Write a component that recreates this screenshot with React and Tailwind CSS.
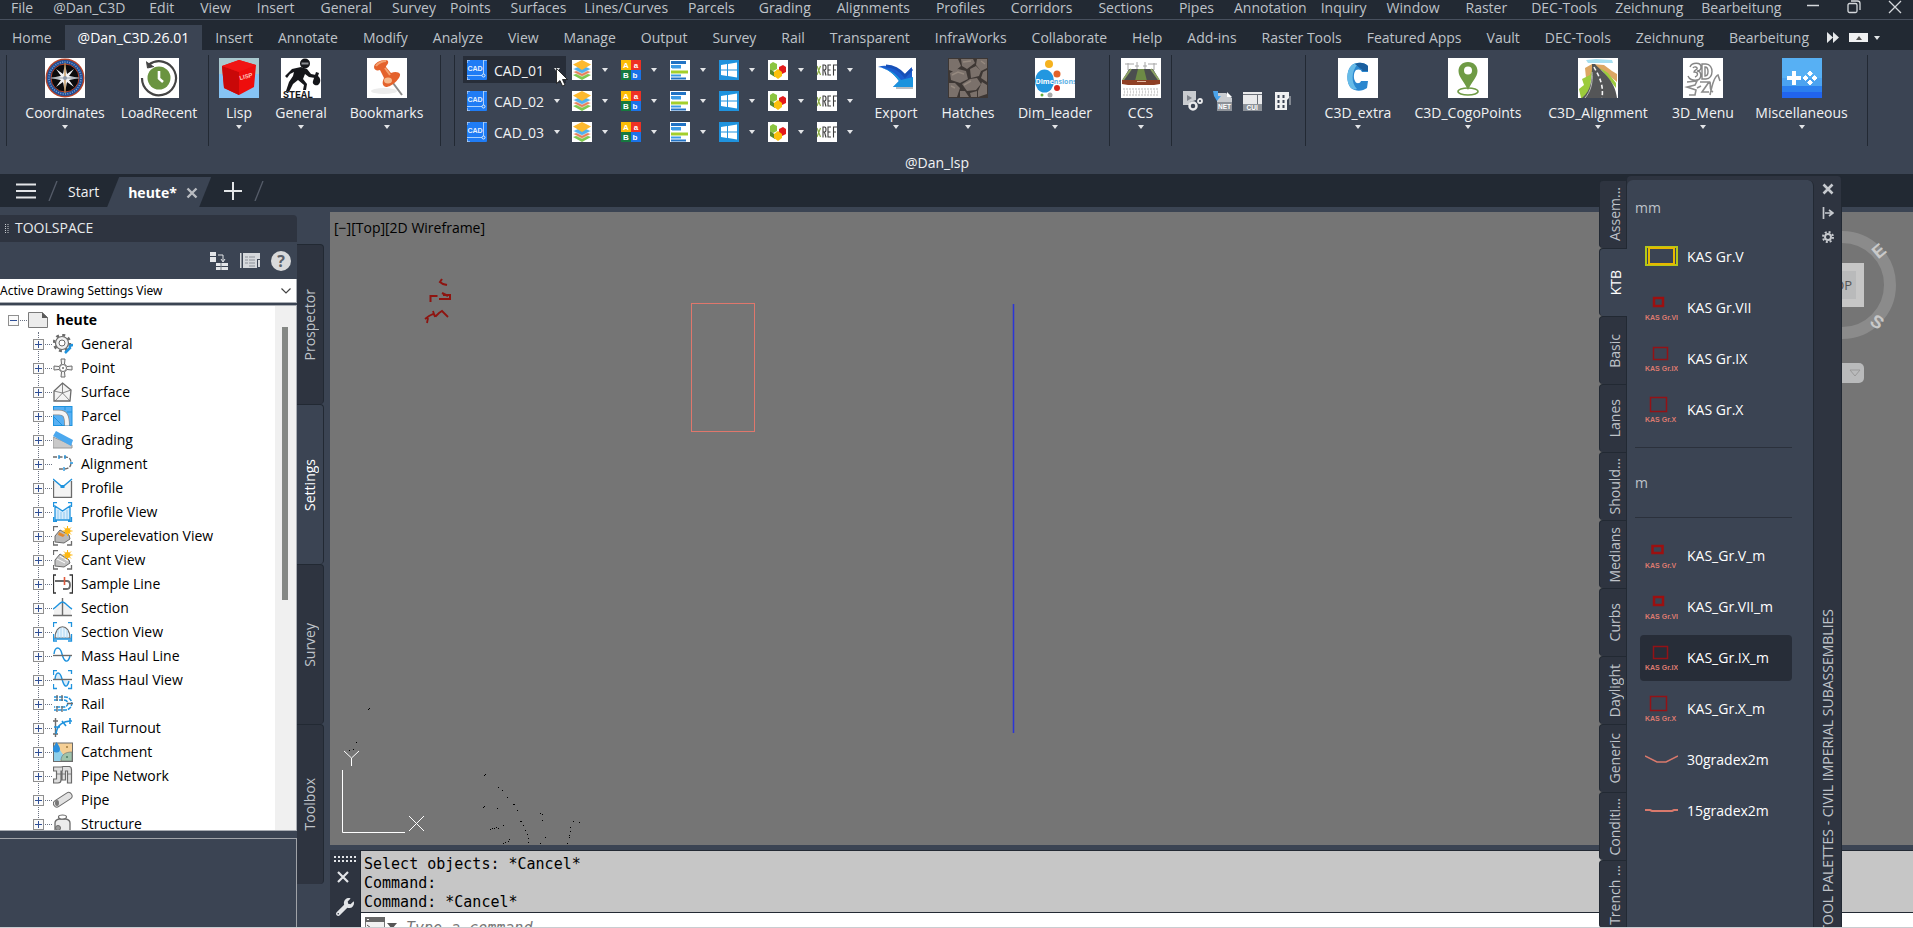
import { FaWrench } from "react-icons/fa";

const menus = [
  ["File", "mr-5"], ["@Dan_C3D", "mr-6"], ["Edit", "mr-[26px]"], ["View", "mr-[26px]"],
  ["Insert", "mr-[26px]"], ["General", "mr-5"], ["Survey", "mr-[14px]"], ["Points", "mr-5"],
  ["Surfaces", "mr-[18px]"], ["Lines/Curves", "mr-5"], ["Parcels", "mr-6"], ["Grading", "mr-[26px]"],
  ["Alignments", "mr-[26px]"], ["Profiles", "mr-[26px]"], ["Corridors", "mr-[26px]"], ["Sections", "mr-[26px]"],
  ["Pipes", "mr-5"], ["Annotation", "mr-[14px]"], ["Inquiry", "mr-5"], ["Window", "mr-[26px]"],
  ["Raster", "mr-6"], ["DEC-Tools", "mr-[18px]"], ["Zeichnung", "mr-[18px]"], ["Bearbeitung", ""],
];

const ribbonTabs = [
  "Home", "@Dan_C3D.26.01", "Insert", "Annotate", "Modify", "Analyze", "View", "Manage", "Output",
  "Survey", "Rail", "Transparent", "InfraWorks", "Collaborate", "Help", "Add-ins", "Raster Tools",
  "Featured Apps", "Vault", "DEC-Tools", "Zeichnung", "Bearbeitung",
];

function Caret({ className = "" }) {
  return (
    <svg viewBox="0 0 6 4" className={`w-[6px] h-1 shrink-0 ${className}`} aria-hidden="true">
      <path d="M0 0h6L3 4z" fill="#e3e5e8" />
    </svg>
  );
}

/* ---------- large ribbon icons, 40x40 ---------- */

const bigIcons = {
  Coordinates: (
    <>
      <rect width="40" height="40" fill="#fff" />
      <circle cx="20" cy="20" r="19.5" fill="#b5432a" />
      <circle cx="20" cy="20" r="18" fill="#1f4f96" />
      <circle cx="20" cy="20" r="16" fill="none" stroke="#7ea3d6" strokeWidth="1.5" strokeDasharray="1 1.4" />
      <circle cx="20" cy="20" r="14" fill="#0b0b0d" stroke="#b5432a" strokeWidth="1" />
      <path d="M20 6l2.4 11.6L34 20l-11.6 2.4L20 34l-2.4-11.6L6 20l11.6-2.4z" fill="#cfd3d8" />
      <path d="M11 11l7 5 2-3 2 3 7-5-5 7 3 2-3 2 5 7-7-5-2 3-2-3-7 5 5-7-3-2 3-2z" fill="#f1f2f4" />
      <path d="M20 5v30" stroke="#c08a45" strokeWidth="1.2" />
      <path d="M6 20h28" stroke="#9aa0a8" strokeWidth="1" />
      <circle cx="20" cy="20" r="2" fill="#8d98a8" />
    </>
  ),
  LoadRecent: (
    <>
      <rect width="40" height="40" fill="#fff" />
      <path d="M3 20A17 17 0 1 0 10 6.500" fill="none" stroke="#444" strokeWidth="2.2" />
      <path d="M7.500 3.500l1 6.500 6.500-1.500" fill="#444" stroke="#444" strokeWidth="1" />
      <circle cx="20" cy="20" r="11.500" fill="#6a9440" />
      <path d="M20 13v7.500l4 3.500" fill="none" stroke="#fff" strokeWidth="2.6" />
    </>
  ),
  Lisp: (
    <>
      <rect width="40" height="40" fill="#86c4f5" />
      <rect width="40" height="16" fill="#a9c9cf" />
      <path d="M20 2l17 5-2 22-15 8L5 30 3 8z" fill="#ee0d0d" />
      <path d="M3 8l17 6v23L5 30z" fill="#c90808" />
      <path d="M20 2l17 5-17 7L3 8z" fill="#f01414" />
      <text x="21" y="22" fontSize="6" fontWeight="700" fill="#ffc9c0" transform="rotate(-14 21 22)" fontFamily="Liberation Sans, sans-serif">LISP</text>
    </>
  ),
  General: (
    <>
      <rect width="40" height="40" fill="#fff" />
      <circle cx="24" cy="5.500" r="5" fill="#15161a" />
      <path d="M20.500 4.500h7v2h-7z" fill="#8b8d92" />
      <path d="M11 11l9-2 6 2 4 5 5 1-1 3-6-1-4-3-2 5 4 5-1 6h-3l1-5-6-5-5 4-4 8-3-1 3-9 4-6 1-4-4 2-3 4-2-2z" fill="#15161a" />
      <path d="M35 14l3 1-1 3c3 2 3 7 0 9-3 1-6-1-5-4z" fill="#15161a" />
      <text x="2" y="39.500" fontSize="10" fontWeight="700" fill="#15161a" fontFamily="Liberation Mono, monospace">STEAL</text>
    </>
  ),
  Bookmarks: (
    <>
      <rect width="40" height="40" fill="#fff" />
      <ellipse cx="17" cy="33" rx="13" ry="3" fill="#ececec" />
      <path d="M26 25l9 12" stroke="#8b8b8b" strokeWidth="2" />
      <path d="M7 9c0-5 11-9 14-6 1 3-2 4-2 6l5 6c4-2 8-1 9 1 1 4-8 13-14 13-4-1-4-5-2-9l-4-8c-3 1-6 0-6-3z" fill="#e4622c" />
      <path d="M9 8c2-3 7-5 10-5M18 10l5 7" fill="none" stroke="#f3a06f" strokeWidth="2" />
      <ellipse cx="21" cy="22.500" rx="4" ry="3" fill="#f5b98d" />
    </>
  ),
  Export: (
    <>
      <rect width="40" height="40" fill="#fff" />
      <path d="M20 30h17" stroke="#b9bcc0" strokeWidth="2" />
      <path d="M2 9c8-3 19 0 26 8l8-8v20H17l6-6C18 16 11 10 2 9z" fill="#1c5fd0" />
      <path d="M2 9c9 1 18 6 23 13l12-3v10H17l6-6C18 16 11 10 2 9z" fill="#1b93dd" />
      <path d="M10 8c8 0 14 4 19 10l7-7" fill="none" stroke="#1750b8" strokeWidth="3" />
    </>
  ),
  Hatches: (
    <>
      <rect width="40" height="40" fill="#3d3734" />
      <path d="M1 1h9l3 7-7 6-5-2zM13 1h12l2 4-8 6-5-3zM29 1h10v9l-6 3-5-6zM2 15l8-4 8 2 2 8-8 4-9-3zM22 11l6-3 5 5-2 5-8 2zM35 14l4-2v12l-6-4zM1 25l6 0 5 5-3 9H1zM14 26l8-5 7-1 4 6-5 6-9 1zM34 24l5 3v9l-9 3v-6zM12 33l5 0 4 6h-9zM22 35l7-2v6h-6z" fill="#7b716b" />
      <path d="M4 17l6-3 6 2M16 27l7-4M15 4l8-1M33 3l4 3M3 28l4 2" stroke="#95897f" strokeWidth="1.500" fill="none" />
    </>
  ),
  Dim_leader: (
    <>
      <rect width="40" height="40" fill="#fff" />
      <circle cx="14" cy="6" r="4" fill="#f5b21f" />
      <ellipse cx="9.500" cy="23" rx="9.500" ry="11.500" fill="#2297e0" />
      <circle cx="22" cy="16" r="3.500" fill="#e2622b" />
      <circle cx="22" cy="30" r="3" fill="#d8281c" />
      <circle cx="15" cy="37" r="2.500" fill="#a9a9a9" />
      <circle cx="7" cy="37" r="1.500" fill="#66ad3a" />
      <text x="0.500" y="25.500" fontSize="7" fontWeight="700" fill="#fff" fontFamily="Open Sans, sans-serif">Dime<tspan fill="#5fb2e6">nsions</tspan></text>
    </>
  ),
  CCS: (
    <>
      <rect width="40" height="40" fill="#fff" />
      <path d="M7 12V5M16 12V4M24 12V4M33 12V5M4 6h9M27 6h9M14 8h4M22 8h4" stroke="#a6a6a6" fill="none" />
      <path d="M8 11h24l7 12H1z" fill="#4b4e4f" />
      <path d="M17 11h6l3 12H14z" fill="#6d8a45" />
      <path d="M10 11L2 22M30 11l8 11" stroke="#8da264" strokeWidth="2" />
      <path d="M1 22h38v4l-6 1H7l-6-1z" fill="#8e3f24" />
      <path d="M16 23.500h9" stroke="#e1b79f" />
      <path d="M2 31h36M2 37h36" stroke="#b5b5b5" strokeDasharray="2 1" />
      <path d="M3 34h34" stroke="#d0d0d0" strokeWidth="3" strokeDasharray="1 2" />
    </>
  ),
  C3D_extra: (
    <>
      <rect width="40" height="40" fill="#fff" />
      <path d="M30 8c-4-4-12-4-16-1-6 5-6 18-1 23 5 4 12 3 16 0l1-7h-7c-1 3-5 3-6 0-2-4-1-9 1-11 2-1 5-1 6 2h6z" fill="#2a87cf" />
      <path d="M14 7c-6 5-6 18-1 23 2 1 4 2 6 1-6-6-6-18 1-25-2-1-4 0-6 1z" fill="#66bbe8" />
      <path d="M30 8c-4-4-9-4-13-2l6 5c1 0 2 1 1 2h6z" fill="#1a5f9f" />
    </>
  ),
  C3D_CogoPoints: (
    <>
      <rect width="40" height="40" fill="#fff" />
      <ellipse cx="20" cy="33.500" rx="10" ry="3.500" fill="none" stroke="#6f9b45" strokeWidth="1.600" />
      <path d="M20 4c-6 0-9.500 4-9.500 9 0 6 6 11 9.500 19 3.500-8 9.500-13 9.500-19 0-5-3.500-9-9.500-9z" fill="#6f9b45" />
      <circle cx="20" cy="12.500" r="4" fill="#fff" />
    </>
  ),
  C3D_Alignment: (
    <>
      <rect width="40" height="40" fill="#fff" />
      <path d="M8 2l10-1 16 1 1 3H10z" fill="#a7dff0" />
      <path d="M7 10l7-4 12 1 8 6 5 3v8L24 12 8 20z" fill="#dca663" />
      <path d="M4 21l8-4 2-5-3 28H3l-2-9 5-4zM22 10l8 5 8 10v5z" fill="#9ccb3c" />
      <path d="M14 6h3c5 6 20 15 22 34H4c10-8 10-20 10-34z" fill="#545557" />
      <path d="M16 9c4 8 10 16 8 31" fill="none" stroke="#f4f4f4" strokeWidth="1.600" strokeDasharray="4 2.500" />
      <path d="M14 14c1 10-1 19-7 26" fill="none" stroke="#b9b9b9" strokeWidth="1" />
    </>
  ),
  "3D_Menu": (
    <>
      <rect width="40" height="40" fill="#fff" />
      <path d="M7 9c2-5 11-5 11 0 0 3-2 4-4 4 5 0 5 8 0 9-4 1-8-1-9-4M10 10c1-2 5-1 4 1-1 1-3 1-3 3 5 0 4 4 1 5M19 6h4c8 0 8 15 0 15h-4zM22 9c4 0 4 9 0 9z" fill="none" stroke="#858585" strokeWidth="1.400" />
      <path d="M4 24l10-1-2 4-8 2 9 3-1 5H6M17 24h9l-7 10h7M14 30l4-2M27 37c2-10 5-19 8-20l2 6M27 24c1 6-1 8 3 10" fill="none" stroke="#8c8c8c" strokeWidth="1.600" />
    </>
  ),
  Miscellaneous: (
    <>
      <rect width="40" height="40" fill="#57b0f4" />
      <rect y="20" width="40" height="8" fill="#4ba3f0" />
      <rect y="28" width="40" height="6" fill="#2b7fee" />
      <rect y="34" width="40" height="6" fill="#2164ee" />
      <path d="M10 13h4v5h5v4h-5v5h-4v-5H5v-4h5z" fill="#fff" />
      <path d="M28 13l2.500 2.500L28 18l-2.500-2.500zM28 22l2.500 2.500L28 27l-2.500-2.500zM23.500 17.500L26 20l-2.500 2.500L21 20zM32.500 17.500L35 20l-2.500 2.500L30 20z" fill="#fff" stroke="#fff" strokeWidth="1" />
    </>
  ),
};

function BigButton({ name, width, menu = true }) {
  return (
    <button className={`flex flex-col items-center shrink-0 pt-[3px] ${width}`}>
      <svg viewBox="0 0 40 40" className="w-10 h-10" aria-hidden="true">{bigIcons[name]}</svg>
      <span className="mt-[5px] h-5 leading-5 whitespace-nowrap">{name}</span>
      {menu && <Caret className="mt-[2px]" />}
    </button>
  );
}

/* ---------- small ribbon icons, 20x20 ---------- */

const smallIcons = [
  <>
    <rect width="20" height="20" fill="#fff" />
    <path d="M10 12l9 3-9 5-9-5z" fill="#7ec850" />
    <path d="M10 8.500l9 3.500-9 4.500L1 12z" fill="#e8805a" stroke="#fff" strokeWidth="0.500" />
    <path d="M10 5l9 4-9 4.500L1 9z" fill="#52b1ee" stroke="#fff" strokeWidth="0.500" />
    <path d="M10 0l9 4.500L10 10 1 4.500z" fill="#fdb92e" />
  </>,
  <>
    <rect width="10" height="10" fill="#fbbc05" />
    <rect x="10" width="10" height="10" fill="#ee3124" />
    <rect y="10" width="10" height="10" fill="#16793f" />
    <rect x="10" y="10" width="10" height="10" fill="#1a73e8" />
    <g fill="#fff" fontSize="8" fontWeight="700" textAnchor="middle" fontFamily="Liberation Sans, sans-serif">
      <text x="5" y="8">A</text>
      <text x="15" y="8">a</text>
      <text x="5" y="18">B</text>
      <text x="14" y="18">b</text>
    </g>
  </>,
  <>
    <rect width="20" height="20" fill="#fff" />
    <path d="M1 1h15v3H1z" fill="#2273c4" />
    <path d="M1 5h10v3H1z" fill="#3c9be6" />
    <path d="M2 8h9v1H2z" fill="#9fcdf0" />
    <path d="M1 10.500h17v3H1z" fill="#a4cf2c" />
    <path d="M1 14.500h10v2H1z" fill="#3c9be6" />
    <path d="M1 17.500h15v2H1z" fill="#2273c4" />
  </>,
  <>
    <rect width="20" height="20" fill="#1f93de" />
    <path d="M2 5l6-1v5.500H2zM9 4l9-1.500v7H9zM2 10.500h6V16l-6-1zM9 10.500h9v7L9 16z" fill="#fff" />
  </>,
  <>
    <rect width="20" height="20" fill="#fff" />
    <path d="M5 2l4 2v5l-4 2-3-2V4z" fill="#8bc53f" />
    <path d="M2 9l3 2 3 3-1 3-5-3z" fill="#5a8a2a" />
    <path d="M15 5l3 2v5l-4 2-3-3V7z" fill="#e31b1b" />
    <path d="M10 9l4 3v4l-4 3-4-3v-4z" fill="#fbc00d" />
  </>,
  <>
    <rect width="20" height="20" fill="#fff" />
    <path d="M0 6l3.500 9M3.500 6L0 15" stroke="#8aac45" strokeWidth="1.200" />
    <path d="M6 15.500v-11M6 5h1.500q1.500 0 1.500 2.500T7.500 10H6M7.500 10L9 15.500M14 5h-3v10h3M11 10h2.500M16.500 15.500V5H20M16.500 10H19" fill="none" stroke="#3c3c3c" strokeWidth="1.100" />
  </>,
];

const smallNames = ["Layers", "Text", "Align", "Window", "Blocks", "Xref"];

function CadIcon() {
  return (
    <svg viewBox="0 0 20 20" className="w-5 h-5 shrink-0" aria-hidden="true">
      <rect width="20" height="20" rx="1" fill="#1f7cf5" />
      <path d="M0 3V0h3M17 0h3M0 17v3h3" fill="none" stroke="#e6f0fd" strokeWidth="1" />
      <path d="M16.500 0v14M0 15.500h15" stroke="#a9d0fb" strokeWidth="1" />
      <circle cx="16.500" cy="15.500" r="1.500" fill="#1f7cf5" stroke="#dfeefd" />
      <text x="0.500" y="11" fontSize="7" fontWeight="700" fill="#e6f0fd" fontFamily="Liberation Sans, sans-serif">CAD</text>
    </svg>
  );
}

function CadRow({ label, active }) {
  return (
    <div className="flex items-center h-[27px]">
      <button className={`flex items-center w-[103px] h-full pl-1 mr-[6px] shrink-0 ${active ? "bg-[#272d38]" : ""}`}>
        <CadIcon />
        <span className="ml-[7px] flex-1 text-left leading-5 pt-[2px]">{label}</span>
        <Caret className="mr-[6px]" />
      </button>
      {smallIcons.map((icon, i) => (
        <button key={i} aria-label={smallNames[i]} className="flex items-center w-[49px] h-full shrink-0">
          <svg viewBox="0 0 20 20" className="w-5 h-5" aria-hidden="true">{icon}</svg>
          <Caret className="ml-[10px]" />
        </button>
      ))}
    </div>
  );
}

function Divider() {
  return <div className="w-px h-[91px] bg-[#222933] shrink-0" />;
}

function MenuBar() {
  return (
    <nav aria-label="Menu" className="flex items-center h-5 pb-[5px] pl-[11px] bg-[#222933] border-b border-[#48505e] text-[#bfc3c9] shrink-0">
      {menus.map(([label, gap]) => (
        <button key={label} className={`leading-[15px] whitespace-nowrap shrink-0 ${gap}`}>{label}</button>
      ))}
      <div className="ml-auto mr-[11px] flex items-center gap-[27px] text-[#d5d8dc]">
        <button aria-label="Minimize"><svg viewBox="0 0 14 14" className="w-[14px] h-[14px]"><path d="M1 5.500h12" stroke="currentColor" strokeWidth="1.500" /></svg></button>
        <button aria-label="Restore"><svg viewBox="0 0 14 14" className="w-[14px] h-[14px]" fill="none" stroke="currentColor" strokeWidth="1.300"><rect x="1" y="3.500" width="9" height="9" rx="1.500" /><path d="M4 1h6.500Q13 1 13 3.500V10" /></svg></button>
        <button aria-label="Close"><svg viewBox="0 0 14 14" className="w-[14px] h-[14px]"><path d="M1 1l12 12M13 1L1 13" stroke="currentColor" strokeWidth="1.300" /></svg></button>
      </div>
    </nav>
  );
}

function RibbonTabs() {
  return (
    <nav aria-label="Ribbon" className="flex gap-px h-[30px] pt-[5px] bg-[#222933] text-[#bfc3c9] shrink-0">
      {ribbonTabs.map((label, i) => (
        <button key={label} className={`whitespace-nowrap shrink-0 ${i === 1 ? "px-[13px] bg-[#3b4453] text-white" : "px-3"}`}>{label}</button>
      ))}
      <div className="flex items-center ml-[5px]">
        <button aria-label="More tabs"><svg viewBox="0 0 12 11" className="w-3 h-[11px]"><path d="M0 0l6 5.500L0 11zM6 0l6 5.500L6 11z" fill="#e6e8ea" /></svg></button>
        <button aria-label="Collapse ribbon" className="ml-[10px] w-[19px] h-[9px] bg-[#f0f1f2] flex items-center justify-center"><svg viewBox="0 0 6 4" className="w-[6px] h-1"><path d="M0 4h6L3 0z" fill="#555" /></svg></button>
        <button aria-label="Ribbon options" className="ml-[6px]"><Caret /></button>
      </div>
    </nav>
  );
}

function Ribbon() {
  return (
    <div className="h-[124px] bg-[#3b4453] text-[#f1f2f3] shrink-0 pl-[6px] pt-[5px] overflow-hidden">
      <div className="w-fit">
        <div className="flex h-[98px]">
          <Divider />
          <div className="flex pl-[11px] pr-[2px]">
            <BigButton name="Coordinates" width="w-[94px]" />
            <BigButton name="LoadRecent" width="w-[94px]" menu={false} />
          </div>
          <Divider />
          <BigButton name="Lisp" width="w-[60px]" />
          <BigButton name="General" width="w-16" />
          <BigButton name="Bookmarks" width="w-[107px]" />
          <Divider />
          <div className="w-[13px] shrink-0" />
          <Divider />
          <div className="flex flex-col gap-1 pl-2 pt-px">
            <CadRow label="CAD_01" active />
            <CadRow label="CAD_02" />
            <CadRow label="CAD_03" />
          </div>
          <BigButton name="Export" width="w-[60px]" />
          <BigButton name="Hatches" width="w-[84px]" />
          <BigButton name="Dim_leader" width="w-[90px]" />
          <div className="w-[9px] shrink-0" />
          <Divider />
          <BigButton name="CCS" width="w-[61px]" />
          <Divider />
          <div className="flex items-center gap-[10px] w-[133px] h-[91px] pl-[11px] shrink-0">
            <button aria-label="Run script">
              <svg viewBox="0 0 20 20" className="w-5 h-5">
                <path d="M0 0h13v9l-6 2v3H0z" fill="#c9ccd0" />
                <path d="M4 4l5 3-5 3z" fill="#7d828a" />
                <circle cx="10" cy="15" r="3.500" fill="#3b4453" stroke="#e9eaec" strokeWidth="2.500" />
                <circle cx="17" cy="10" r="2" fill="#3b4453" stroke="#e9eaec" strokeWidth="1.800" />
              </svg>
            </button>
            <button aria-label="Load .NET">
              <svg viewBox="0 0 20 20" className="w-5 h-5">
                <path d="M4 2h9l6 5v13H4z" fill="#c9ccd0" />
                <path d="M14 1v5h5z" fill="#fff" />
                <path d="M0 0h5v5h3l-4 5-3-5z" fill="#4aa3ea" />
                <rect x="4" y="11" width="15" height="9" fill="#8d9299" />
                <text x="5" y="18" fontSize="6.500" fontWeight="700" fill="#fff" fontFamily="Liberation Sans, sans-serif">NET</text>
              </svg>
            </button>
            <button aria-label="Customize interface">
              <svg viewBox="0 0 20 20" className="w-5 h-5">
                <rect y="1" width="19" height="18" fill="#e9eaec" />
                <path d="M0 3.500h19M14.500 4v9" stroke="#6b7078" />
                <rect y="13" width="19" height="7" fill="#8d9299" />
                <text x="3.500" y="19" fontSize="6.500" fontWeight="700" fill="#fff" fontFamily="Liberation Sans, sans-serif">CUI</text>
              </svg>
            </button>
            <button aria-label="Block list">
              <svg viewBox="0 0 20 20" className="w-5 h-5">
                <path d="M2 1h14v6l-2 2v10H2z" fill="#f0f1f2" />
                <path d="M4.500 4h2v3h-2zM9.500 4h2v3h-2zM4.500 9h2v3h-2zM9.500 9h2v3h-2zM4.500 14h2v3h-2zM9.500 14h2v3h-2z" fill="#3b4453" />
                <path d="M17 5v9" stroke="#c9ccd0" />
              </svg>
            </button>
          </div>
          <Divider />
          <BigButton name="C3D_extra" width="w-[104px]" />
          <BigButton name="C3D_CogoPoints" width="w-[116px]" />
          <BigButton name="C3D_Alignment" width="w-36" />
          <BigButton name="3D_Menu" width="w-[66px]" />
          <BigButton name="Miscellaneous" width="w-[131px]" />
          <Divider />
        </div>
        <div className="text-center leading-5">@Dan_lsp</div>
      </div>
    </div>
  );
}

function Slash() {
  return (
    <svg viewBox="0 0 10 20" className="w-[10px] h-5 shrink-0" aria-hidden="true"><path d="M9 0L1 20" stroke="#565d6a" strokeWidth="1.300" /></svg>
  );
}

function FileTabs() {
  return (
    <div className="flex items-center h-[33px] bg-[#222933] pl-4 pt-px text-[#f1f2f3] shrink-0">
      <button aria-label="Main menu"><svg viewBox="0 0 20 16" className="w-5 h-4"><path d="M0 1.500h20M0 8h20M0 14.500h20" stroke="#e3e5e8" strokeWidth="2" /></svg></button>
      <div className="ml-3"><Slash /></div>
      <button className="ml-[10px] pt-[2px]">Start</button>
      <div className="flex items-center self-end ml-2 h-[30px] w-[104px] pt-px pl-[21px] bg-[#3b4453] [clip-path:polygon(12px_0,100%_0,92px_100%,0_100%)]">
        <button className="font-bold text-white">heute*</button>
        <button aria-label="Close heute" className="ml-[9px]"><svg viewBox="0 0 12 12" className="w-3 h-3"><path d="M1.500 1.500l9 9M10.500 1.500l-9 9" stroke="#b9bcc1" strokeWidth="2.400" /></svg></button>
      </div>
      <button aria-label="New drawing" className="ml-[13px]"><svg viewBox="0 0 18 18" className="w-[18px] h-[18px]"><path d="M9 0v18M0 9h18" stroke="#e3e5e8" strokeWidth="2" /></svg></button>
      <div className="ml-3"><Slash /></div>
    </div>
  );
}

/* ---------- toolspace ---------- */

const G = "#6b6b6b";
const B = "#1f93de";

const tree = [
  ["General", <>
    <circle cx="9" cy="9" r="8" fill="none" stroke={G} strokeWidth="2.500" strokeDasharray="3 3.280" />
    <circle cx="9" cy="9" r="6.500" fill="#f1f1f1" stroke={G} strokeWidth="1.200" />
    <circle cx="9" cy="9" r="3" fill="#fff" stroke={G} />
    <path d="M12 19l5-5c-1-2 1-3 3-3" stroke={B} strokeWidth="2.500" fill="none" />
  </>],
  ["Point", <>
    <path d="M8 1h4l-.5 5L14 8.500l5-.5v4l-5-.5-2.500 2.500.5 5H8l.5-5L6 11.500 1 12V8l5 .5L8.500 6z" fill="#f3f3f3" stroke={G} />
    <circle cx="10" cy="10" r="3.500" fill="#fff" stroke={G} />
    <circle cx="10" cy="10" r="1" fill={G} />
  </>],
  ["Surface", <>
    <path d="M9.500 1L18 8l-1 11H1V9z" fill="#f3f3f3" stroke={G} strokeWidth="1.300" />
    <path d="M9.500 1v10M1 9l8.500 2L18 8M9.500 11L2 19M9.500 11l7.500 8" stroke={G} fill="none" strokeWidth="0.800" />
  </>],
  ["Parcel", <>
    <rect x="0.500" y="0.500" width="18.500" height="19" fill="#57b0f4" stroke={B} />
    <path d="M0 6.500h6c6 0 8 3 8 13" stroke="#8a8a8a" strokeWidth="5.500" fill="none" />
    <path d="M0 6.500h6c6 0 8 3 8 13" stroke="#f4f4f4" strokeWidth="4" fill="none" />
    <path d="M12 0v4M14 6h5M0 10l9 9" stroke={B} fill="none" />
  </>],
  ["Grading", <>
    <path d="M0 7v11h19v-3z" fill="#c9c9c9" stroke="#999" />
    <path d="M3 1l17 9-2 6L0 6z" fill="#4ba8ee" />
  </>],
  ["Alignment", <>
    <path d="M0 3h12c5 0 6 3 6 6 0 4-3 6-7 6H6" fill="none" stroke={G} strokeWidth="1.300" strokeDasharray="4 1.500" />
    <path d="M6 1v4M12 1v4M17 9h3M11 13v4" stroke={B} strokeWidth="1.300" />
  </>],
  ["Profile", <>
    <path d="M0.500 1v18.500h18V1L9.500 9z" fill="#f3f3f3" />
    <path d="M0.500 3v16.500h18V3" fill="none" stroke={G} strokeWidth="1.300" />
    <path d="M0 1l9.500 8L19 1" fill="none" stroke={B} strokeWidth="1.400" />
    <rect x="7.500" y="7" width="4" height="3" fill={B} />
  </>],
  ["Profile View", <>
    <path d="M2 4v14h15V4l-7.500 5z" fill="#d7ecfb" />
    <path d="M5 8v9M8 10v7M11 10v7M14 8v9" stroke="#8cc8f2" />
    <path d="M0.500 5V0.500H4M15 0.500h3.500V5M0.500 15v4.500H4M15 19.500h3.500V15M2 4l7.500 5L17 4v14H2z" fill="none" stroke={B} strokeWidth="1.300" />
  </>],
  ["Superelevation View", <>
    <path d="M0.500 5V0.500H5M0.500 15v4H5M14 19h4.500v-4" fill="none" stroke={G} strokeWidth="1.300" />
    <path d="M2 10l5-6 9 5 1 4-6 4-9-1z" fill="#b9b9b9" stroke={G} />
    <path d="M6 6l6 3-2 2-5-2z" fill="#e3872a" />
    <circle cx="14.500" cy="5" r="3" fill="#fdb813" />
    <path d="M14.500 0v10M9.500 5h10M11 1.500l7 7M18 1.500l-7 7" stroke="#fdb813" />
  </>],
  ["Cant View", <>
    <path d="M0.500 5V0.500H5M0.500 15v4H5M14 19h4.500v-4" fill="none" stroke={G} strokeWidth="1.300" />
    <path d="M2 10l5-6 9 6 1 3-6 4-9-1z" fill="#c4c4c4" stroke={G} />
    <path d="M4 9l8 4M7 6l8 5" stroke="#fff" />
    <circle cx="14.500" cy="5" r="3" fill="#fdb813" />
    <path d="M14.500 0v10M9.500 5h10M11 1.500l7 7M18 1.500l-7 7" stroke="#fdb813" />
  </>],
  ["Sample Line", <>
    <path d="M3 1H0.500v18H3M16.500 1h3v18h-3" fill="none" stroke="#333" strokeWidth="1.300" />
    <path d="M2 7h12c4 0 4 8 0 8h-4" fill="none" stroke={G} strokeWidth="1.800" />
    <path d="M11.500 3v8" stroke="#e05a3c" strokeWidth="1.600" />
  </>],
  ["Section", <>
    <path d="M1 12l8-8 9 8v6H1z" fill="#f1f1f1" />
    <path d="M0 17.500h19M9.500 0v17.500" stroke={G} strokeWidth="1.400" />
    <path d="M0 11C4 9 7 4 9.500 4S15 9 19 11" fill="none" stroke={B} strokeWidth="1.400" />
  </>],
  ["Section View", <>
    <path d="M2 16C2 1 17 1 17 16z" fill="#e9f4fc" stroke={G} strokeWidth="1.200" />
    <path d="M5 8v8M8 6v10M11 6v10M14 8v8" stroke="#a9d6f5" />
    <path d="M0.500 5V0.500H4M15 0.500h3.500V5M0.500 12v7H4M15 19h3.500v-7M1 17h17" fill="none" stroke={B} strokeWidth="1.300" />
  </>],
  ["Mass Haul Line", <>
    <path d="M1 8c1-8 6-8 8 0s6 10 8 2" fill="none" stroke={B} strokeWidth="1.400" />
    <path d="M0 9.500h19" stroke={G} strokeWidth="1.400" />
  </>],
  ["Mass Haul View", <>
    <path d="M2 9c1-8 5-8 7 0s5 10 7 2" fill="#d7ecfb" stroke={B} strokeWidth="1.400" />
    <path d="M0 9.500h19" stroke={G} strokeWidth="1.400" />
    <path d="M0.500 5V0.500H4M15 0.500h3.500V4M0.500 14v4.500H4M15 18.500h3.500V14" fill="none" stroke={B} strokeWidth="1.300" />
  </>],
  ["Rail", <>
    <path d="M1 3h11c9 0 9 13 0 13H1M1 6h10c5 0 5 7 0 7H1" fill="none" stroke={B} strokeWidth="1.500" strokeDasharray="4 1" />
    <path d="M4 1v6M9 1v6M4 12v6M9 12v6M14 9.500h6" stroke={G} strokeWidth="1.300" />
  </>],
  ["Rail Turnout", <>
    <path d="M2.500 0v19M0 3h5M0 16h5" stroke={G} strokeWidth="1.400" />
    <path d="M3 16C4 7 9 3 19 3M1 9h6M9 3l4 5M17 0v6" fill="none" stroke={B} strokeWidth="1.600" />
  </>],
  ["Catchment", <>
    <rect x="0.500" y="1" width="19" height="18.500" fill="#f5cf95" stroke={G} />
    <path d="M1 8h6l4 6-4 5H1z" fill="#8fd0ea" />
    <path d="M8 19c0-7 5-9 11-9v9z" fill="#9fc3ab" stroke={G} strokeWidth="0.600" />
    <path d="M3.500 0C6 4 7 5 7 7a3.500 3.500 0 0 1-7 0c0-2 1-3 3.500-7z" fill="#2b8fdc" />
    <circle cx="14" cy="5" r="1" fill="#a07a3c" />
    <circle cx="14" cy="15" r="1" fill="#4c7a62" />
  </>],
  ["Pipe Network", <>
    <path d="M0.500 1h7.500q2 0 2-0.500h6q2.500 0 2.500 3V17h-4V5h-2v9h-3.500V5H8v9q0 3-3 3H0.500v-4h3V5h-3z" fill="#dedede" stroke={G} strokeWidth="1.200" />
    <path d="M3.500 8H8M9 8h3.500M14.500 8h4M9.500 1v4" stroke={G} strokeWidth="0.800" />
  </>],
  ["Pipe", <>
    <path d="M4 13.500L15.500 6" stroke={G} strokeWidth="8" strokeLinecap="round" />
    <path d="M4 13.500L15.500 6" stroke="#e2e2e2" strokeWidth="6" strokeLinecap="round" />
    <ellipse cx="4" cy="13" rx="2" ry="3" fill="#777" />
  </>],
  ["Structure", <>
    <path d="M2 20V9q0-3 4-4h7q4 1 4 4v11" fill="#ececec" stroke={G} strokeWidth="1.300" />
    <ellipse cx="9.500" cy="3" rx="4" ry="2" fill="#fff" stroke={G} strokeWidth="1.200" />
    <circle cx="5" cy="14" r="2.500" fill="#999" stroke={G} />
  </>],
];

function Expander({ open }) {
  return (
    <svg viewBox="0 0 11 11" className="w-[11px] h-[11px] shrink-0" aria-hidden="true">
      <rect x="0.500" y="0.500" width="10" height="10" fill="#fafafa" stroke="#8f8f8f" />
      <path d={open ? "M2 5.500h7" : "M2 5.500h7M5.500 2v7"} stroke="#2f4f96" />
    </svg>
  );
}

function Toolspace() {
  return (
    <aside className="w-[297px] shrink-0 flex flex-col">
      <div className="flex items-center h-[27px] bg-[#2e3440] rounded-tr text-[#e8eaec] shrink-0">
        <svg viewBox="0 0 4 10" className="w-1 h-[10px] ml-[5px]" aria-hidden="true"><path d="M0.500 0v10M3 0v10" stroke="#c9ccd0" strokeDasharray="1 1" /></svg>
        <h2 className="ml-[6px] pb-px">TOOLSPACE</h2>
      </div>
      <div className="flex items-center justify-end gap-[11px] h-[37px] pr-[6px] shrink-0">
        <button aria-label="Item view">
          <svg viewBox="0 0 20 20" className="w-5 h-5"><path d="M1 1h6v4H1zM1 6h6v5H1zM7 12h12v3H7zM7 16h12v3H7z" fill="#e3e5e8" /><path d="M9 4h5v6M12 8l2 3 2-3" fill="none" stroke="#e3e5e8" /><path d="M12 12v7" stroke="#777c84" /></svg>
        </button>
        <button aria-label="Panorama">
          <svg viewBox="0 0 20 20" className="w-5 h-5"><path d="M0 2h1.500v15H0zM3 2h17v6h-3v9H3z" fill="#d5d8dc" /><path d="M18 9h2v7h-2z" fill="#d5d8dc" /><path d="M5 6h3M5 9h3M5 12h3M9 6h6M9 9h6M9 12h6M9 15h6" stroke="#8b9098" /></svg>
        </button>
        <button aria-label="Help" className="w-5 h-5 rounded-full bg-[#d9dadb] text-[#5b6068] text-base font-bold leading-5">?</button>
      </div>
      <div className="relative h-6 shrink-0">
        <select aria-label="Settings view" className="appearance-none w-full h-6 bg-white text-black border-b border-r border-[#a9adb3] text-xs font-[Noto_Sans,sans-serif] outline-none">
          <option>Active Drawing Settings View</option>
        </select>
        <svg viewBox="0 0 10 6" className="absolute right-[6px] top-[9px] w-[10px] h-[6px] pointer-events-none" aria-hidden="true"><path d="M0.500 0.500L5 5l4.500-4.500" fill="none" stroke="#444" strokeWidth="1.200" /></svg>
      </div>
      <div className="flex mt-[2px] flex-1 min-h-0 bg-white border-y border-r border-[#a9adb3] text-black overflow-hidden">
        <div className="flex-1 pt-[2px]">
          <button className="flex items-center h-6 pl-2">
            <Expander open />
            <span className="w-[7px] mx-px border-t border-dotted border-gray-500" />
            <svg viewBox="0 0 20 16" className="w-5 h-4" aria-hidden="true"><path d="M0.500 0.500H14l5.500 5v10H0.500z" fill="#ececec" stroke="#7a7a7a" /><path d="M14 0l6 6h-6z" fill="#5b5b5b" /></svg>
            <span className="ml-2 font-bold">heute</span>
          </button>
          <ul className="ml-[38px] border-l border-dotted border-gray-500">
            {tree.map(([label, icon]) => (
              <li key={label}>
                <button className="flex items-center h-6 -ml-[6px]">
                  <Expander />
                  <span className="w-[7px] ml-px border-t border-dotted border-gray-500" />
                  <svg viewBox="0 0 20 20" className="w-5 h-5 ml-px" aria-hidden="true">{icon}</svg>
                  <span className="ml-2 whitespace-nowrap">{label}</span>
                </button>
              </li>
            ))}
          </ul>
        </div>
        <div className="w-[21px] bg-[#f0f0f0] pt-[21px] pl-[7px]">
          <div className="w-[6px] h-[273px] bg-[#858885]" />
        </div>
      </div>
      <div className="h-[89px] mt-[7px] border-t border-r border-[#a0a3a8] shrink-0" />
    </aside>
  );
}

function SideTabs() {
  return (
    <div className="w-[27px] pt-[29px] shrink-0" role="tablist">
      {["Prospector", "Settings", "Survey", "Toolbox"].map((t) => (
        <button key={t} role="tab" aria-selected={t === "Settings"}
          className={`flex items-center justify-center w-full h-40 rounded-r border-t border-r border-[#222933] ${t === "Settings" ? "text-white" : "bg-[#2e3440] text-[#bfc3c9]"}`}>
          <span className="[writing-mode:vertical-rl] rotate-180">{t}</span>
        </button>
      ))}
    </div>
  );
}

/* ---------- drawing area ---------- */

const dots = [
  [38, 497], [39, 496], [26, 530], [19, 538], [23, 537], [154, 563], [155, 562], [168, 575], [172, 578],
  [177, 585], [183, 592], [184, 592], [187, 598], [153, 595], [154, 594], [167, 596], [190, 609], [191, 609],
  [193, 613], [195, 618], [197, 622], [198, 626], [198, 630], [160, 617], [162, 616], [164, 616], [166, 615],
  [168, 616], [173, 613], [173, 631], [175, 630], [178, 629], [179, 627], [210, 601], [212, 602], [212, 608],
  [215, 625], [210, 631], [243, 609], [249, 610], [240, 615], [240, 619], [239, 623], [239, 625], [237, 631],
];

function Canvas() {
  return (
    <main className="relative flex-1 min-h-0 bg-[#757575] overflow-hidden">
      <p className="pl-1 pt-[6px] leading-5 text-black">[−][Top][2D Wireframe]</p>
      <svg className="absolute inset-0 w-full h-full" fill="none" aria-hidden="true">
        <path d="M112 67l-2 3 3 2 4 1M100.500 90v-6h7M109 87h11v-4h-7M112 81l6 3" stroke="#8e1410" strokeWidth="2" />
        <path d="M95 107l4-3 4-2 3 2 3-3 3-2 6 6M97 111l1-5M103 99l2 6" stroke="#8e1410" strokeWidth="1.800" />
        <rect x="361.500" y="91.500" width="63" height="128" stroke="#e0776c" />
        <path d="M683.500 92v429" stroke="#2b34d8" strokeWidth="1.500" />
        {dots.map(([x, y]) => <rect key={`${x}-${y}`} x={x} y={y} width="1" height="1" fill="#000" />)}
        <path d="M12.500 558v62.500H75" stroke="#fff" />
        <path d="M14 539l7.500 7 7.500-7M21.500 546v8M79 604l15 15M94 604l-15 15" stroke="#fff" />
      </svg>
      <svg viewBox="0 0 110 160" className="absolute right-[17px] top-[18px] w-[110px] h-40" aria-hidden="true">
        <circle cx="56" cy="55" r="48" fill="none" stroke="#8b8b8b" strokeWidth="12" />
        <rect x="34" y="33" width="44" height="44" fill="#c6c6c6" />
        <rect x="42" y="41" width="28" height="28" fill="#b9babb" />
        <text x="41" y="60" fontSize="13" fill="#555" fontFamily="Open Sans, sans-serif">TOP</text>
        <g fontSize="18" fontWeight="700" fill="#c9c9c9" textAnchor="middle" fontFamily="Liberation Sans, sans-serif">
          <text x="93" y="27" transform="rotate(-40 93 21)">E</text>
          <text x="91" y="98" transform="rotate(35 91 92)">S</text>
        </g>
        <rect x="10" y="133" width="68" height="20" rx="5" fill="#b9babb" />
        <path d="M64 140h10l-5 6z" fill="none" stroke="#999" />
      </svg>
    </main>
  );
}

function CommandLine() {
  return (
    <section className="flex h-[77px] mt-[5px] shrink-0 overflow-hidden">
      <div className="w-[30px] bg-[#2e3440] flex flex-col items-center shrink-0 pt-[6px] text-[#e3e5e8]">
        <svg viewBox="0 0 22 6" className="w-[22px] h-[6px]" aria-hidden="true"><path d="M0 1h22M0 5h22" stroke="currentColor" strokeWidth="2" strokeDasharray="2 2" /></svg>
        <button aria-label="Close command line" className="mt-[9px] mr-1"><svg viewBox="0 0 12 12" className="w-3 h-3"><path d="M1 1l10 10M11 1L1 11" stroke="currentColor" strokeWidth="2.200" /></svg></button>
        <button aria-label="Customize" className="mt-[15px] mr-px"><FaWrench className="w-[18px] h-[18px] -scale-x-100 rotate-90" /></button>
      </div>
      <div className="flex-1 min-w-0 border-l border-t border-[#222933] font-['DejaVu_Sans_Mono',monospace] text-[15px]">
        <div className="h-[62px] bg-[#c6c6c6] pl-[3px] pt-1 border-b border-[#222933] text-black leading-[19px]">
          <p>Select objects: *Cancel*</p>
          <p>Command:</p>
          <p>Command: *Cancel*</p>
        </div>
        <div className="flex items-start h-7 pt-1 pl-1 bg-white">
          <svg viewBox="0 0 20 18" className="w-5 h-[18px] shrink-0" aria-hidden="true"><rect x="0.500" y="0.500" width="19" height="17" fill="#f1f1f1" stroke="#777" /><path d="M0 0h20v5H0z" fill="#666" /><path d="M2 2.500h2" stroke="#fff" /><path d="M2 8l4 3-4 3M7 14h4" stroke="#555" fill="none" /></svg>
          <svg viewBox="0 0 10 6" className="w-[10px] h-[6px] ml-[2px] mt-[6px]" aria-hidden="true"><path d="M0 0h10L5 6z" fill="#555" /></svg>
          <input aria-label="Command" placeholder="Type a command" className="ml-[9px] flex-1 h-[22px] italic outline-none placeholder:text-[#777]" />
        </div>
      </div>
    </section>
  );
}

/* ---------- tool palettes ---------- */

function Tag({ children }) {
  return <text x="0" y="28" fontSize="7" fontWeight="700" fill="#dc7a70" fontFamily="Liberation Sans, sans-serif">{children}</text>;
}

const paletteIcons = {
  v: <><rect x="1" y="6" width="31" height="18" fill="none" stroke="#b5c916" strokeWidth="2" /><rect x="4" y="7" width="25" height="16" fill="none" stroke="#e8b800" strokeWidth="2" /></>,
  vm: <><rect x="7.500" y="6" width="10" height="7" fill="none" stroke="#9c1010" strokeWidth="2.500" /><Tag>KAS Gr.V</Tag></>,
  vii: <><rect x="9" y="6" width="9" height="8" fill="none" stroke="#9c1010" strokeWidth="2.500" /><Tag>KAS Gr.VII</Tag></>,
  ix: <><rect x="8.500" y="4.500" width="14" height="12" fill="none" stroke="#931216" strokeWidth="1.500" /><Tag>KAS Gr.IX</Tag></>,
  x: <><rect x="5.500" y="3.500" width="16" height="14" fill="none" stroke="#931216" strokeWidth="1.500" /><Tag>KAS Gr.X</Tag></>,
  g30: <path d="M0 12l12 6h9l12-6" fill="none" stroke="#d9796c" strokeWidth="1.500" />,
  g15: <path d="M0 15h5l2 1h20l2-1h4" fill="none" stroke="#d9796c" strokeWidth="2" />,
};

const paletteTabs = ["Assem...", "KTB", "Basic", "Lanes", "Should...", "Medians", "Curbs", "Daylight", "Generic", "Conditi...", "Trench ..."];
const mmTools = [["KAS Gr.V", "v"], ["KAS Gr.VII", "vii"], ["KAS Gr.IX", "ix"], ["KAS Gr.X", "x"]];
const mTools = [["KAS_Gr.V_m", "vm"], ["KAS_Gr.VII_m", "vii"], ["KAS_Gr.IX_m", "ix"], ["KAS_Gr.X_m", "x"], ["30gradex2m", "g30"], ["15gradex2m", "g15"]];

function ToolList({ items, selected }) {
  return (
    <ul className="flex flex-col gap-[5px] pl-[5px]">
      {items.map(([label, icon]) => (
        <li key={label}>
          <button className={`flex items-center w-full h-[46px] pl-[5px] rounded-sm ${label === selected ? "bg-[#272d38]" : ""}`}>
            <svg viewBox="0 0 33 32" className="w-[33px] h-8 shrink-0" aria-hidden="true">{paletteIcons[icon]}</svg>
            <span className="ml-[9px] whitespace-nowrap text-white">{label}</span>
          </button>
        </li>
      ))}
    </ul>
  );
}

function ToolPalettes() {
  return (
    <aside className="absolute right-[71px] top-[176px] bottom-0 flex overflow-hidden">
      <div className="w-7 pt-1 shrink-0" role="tablist">
        {paletteTabs.map((t) => (
          <button key={t} role="tab" aria-selected={t === "KTB"}
            className={`flex items-center justify-center w-full h-[68px] pl-1 rounded-l border-t border-l border-[#222933] ${t === "KTB" ? "bg-[#3b4453] text-white" : "bg-[#2e3440] text-[#bfc3c9] border-r"}`}>
            <span className="[writing-mode:vertical-rl] rotate-180 whitespace-nowrap">{t}</span>
          </button>
        ))}
      </div>
      <div className="flex bg-[#2e3440] rounded-t pt-1 border-r border-[#222933]">
        <div className="w-[187px] bg-[#3b4453] rounded-t-md border-r border-[#222933] pl-2 pr-[21px]">
          <h3 className="pt-[18px] h-[54px] leading-5 text-[#bfc3c9]">mm</h3>
          <ToolList items={mmTools} />
          <h3 className="mt-[14px] h-[71px] border-y border-[#2b313c] leading-[69px] text-[#bfc3c9]">m</h3>
          <div className="mt-[15px]">
            <ToolList items={mTools} selected="KAS_Gr.IX_m" />
          </div>
        </div>
        <div className="relative w-[27px] flex flex-col items-center gap-3 pt-[3px] text-[#c6c9ce]">
          <button aria-label="Close palettes"><svg viewBox="0 0 12 12" className="w-3 h-3"><path d="M1.500 1.500l9 9M10.500 1.500l-9 9" stroke="currentColor" strokeWidth="2.600" /></svg></button>
          <button aria-label="Auto-hide"><svg viewBox="0 0 12 12" className="w-3 h-3"><path d="M1.500 0v12M3 6h7M7 3l4 3-4 3" fill="none" stroke="currentColor" strokeWidth="1.700" /></svg></button>
          <button aria-label="Properties"><svg viewBox="0 0 12 12" className="w-3 h-3"><circle cx="6" cy="6" r="3" fill="none" stroke="currentColor" strokeWidth="2" /><circle cx="6" cy="6" r="5" fill="none" stroke="currentColor" strokeWidth="2" strokeDasharray="2 1.930" /></svg></button>
          <h2 className="absolute top-[429px] [writing-mode:vertical-rl] rotate-180 whitespace-nowrap text-[#bfc3c9]">TOOL PALETTES - CIVIL IMPERIAL SUBASSEMBLIES</h2>
        </div>
      </div>
    </aside>
  );
}

export default function App() {
  return (
    <div className="relative flex flex-col h-screen overflow-hidden bg-[#3b4453] text-sm font-['Open_Sans',sans-serif] border-b border-[#c9ccd0]">
      <MenuBar />
      <RibbonTabs />
      <Ribbon />
      <FileTabs />
      <div className="flex flex-1 min-h-0">
        <div className="flex pt-2 mr-[6px]">
          <Toolspace />
          <SideTabs />
        </div>
        <div className="flex flex-col flex-1 min-w-0 pt-[5px]">
          <Canvas />
          <CommandLine />
        </div>
      </div>
      <ToolPalettes />
      <svg viewBox="0 0 12 19" className="absolute left-[556px] top-[68px] w-3 h-[19px] pointer-events-none" aria-hidden="true">
        <path d="M0.500 0.500v15l3.500-3 2.500 5.500 2.500-1-2.500-5.500h5z" fill="#fff" stroke="#111" strokeWidth="0.800" />
      </svg>
    </div>
  );
}
